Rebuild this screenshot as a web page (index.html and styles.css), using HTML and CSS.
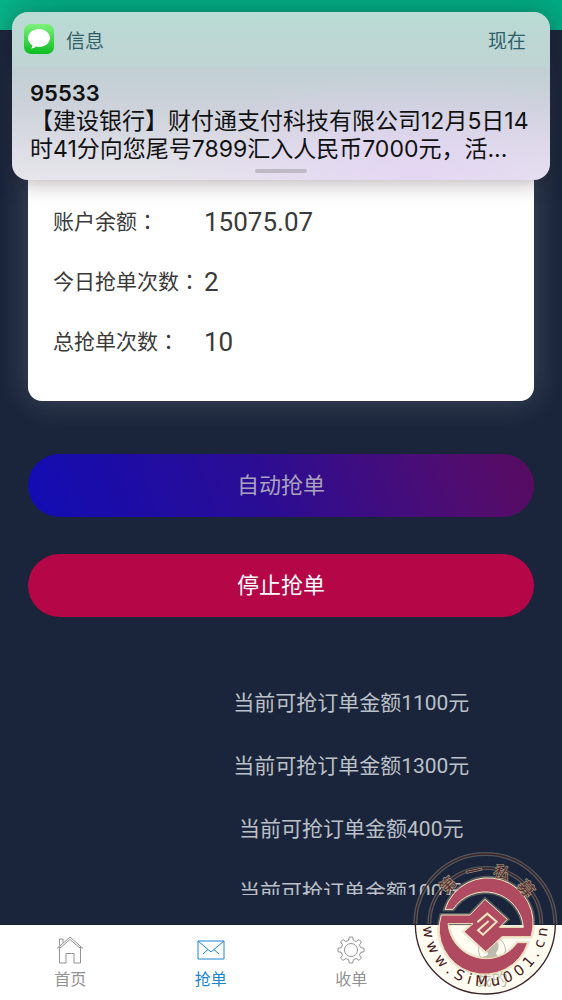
FILE: index.html
```html
<!DOCTYPE html>
<html lang="zh-CN">
<head>
<meta charset="utf-8">
<meta name="viewport" content="width=device-width, initial-scale=1">
<title>抢单</title>
<link rel="stylesheet" href="styles.css">
</head>
<body>
<div class="app">
  <header class="topbar"></header>

  <main class="main">
    <section class="card">
      <dl class="stats">
        <div class="stat"><dt>账户余额<span class="colon" lang="zh-TW">：</span></dt><dd>15075.07</dd></div>
        <div class="stat"><dt>今日抢单次数<span class="colon" lang="zh-TW">：</span></dt><dd>2</dd></div>
        <div class="stat"><dt>总抢单次数<span class="colon" lang="zh-TW">：</span></dt><dd>10</dd></div>
      </dl>
    </section>

    <div class="actions">
      <button type="button" class="btn btn-auto">自动抢单</button>
      <button type="button" class="btn btn-stop">停止抢单</button>
    </div>

    <ul class="orders">
      <li>当前可抢订单金额1100元</li>
      <li>当前可抢订单金额1300元</li>
      <li>当前可抢订单金额400元</li>
      <li>当前可抢订单金额100元</li>
    </ul>
  </main>

  <nav class="tabs">
    <a href="#home" class="tab">
      <svg class="tab-icon" viewBox="0 0 28 28" aria-hidden="true"><path d="M1 12.500 14 1l13 11.500M3.500 10.500V27H10V17.500h8V27h6.500V10.500M3.500 12.500 14 3.500l10.500 9M3.500 9.500V3H7v3.500"/></svg>
      <span>首页</span>
    </a>
    <a href="#grab" class="tab tab-active" aria-current="page">
      <svg class="tab-icon" viewBox="0 0 28 28" aria-hidden="true"><path d="M1 5h26v18H1zM1 5l13 11L27 5M6 18l5-4.500M22 18l-5-4.500"/></svg>
      <span>抢单</span>
    </a>
    <a href="#collect" class="tab">
      <svg class="tab-icon" viewBox="0 0 28 28" aria-hidden="true"><circle cx="14" cy="14" r="6.500"/><path d="M11.600 4.300 12.300 1h3.400l.7 3.300 2.800 1.200L22 3.600 24.400 6l-1.900 2.800 1.200 2.800 3.300.7v3.400l-3.300.7-1.200 2.800 1.900 2.800L22 24.400l-2.800-1.900-2.800 1.200-.7 3.300h-3.400l-.7-3.300-2.800-1.200L6 24.400 3.600 22l1.900-2.800-1.200-2.800L1 15.700v-3.400l3.300-.7 1.200-2.800L3.600 6 6 3.600l2.800 1.900z"/></svg>
      <span>收单</span>
    </a>
    <a href="#mine" class="tab">
      <svg class="tab-icon" viewBox="0 0 28 28" aria-hidden="true"><circle cx="14" cy="14" r="13.500"/><path class="solid" d="M3 22c4-2 7-2 7-5-4-5-4-13 4-13s8 8 4 13c0 3 3 3 7 5-5 7-17 7-22 0z"/></svg>
      <span>我的</span>
    </a>
  </nav>

  <aside class="notice">
    <div class="notice-head">
      <svg class="notice-icon" viewBox="0 0 30 30" aria-hidden="true">
        <defs><linearGradient id="msg" x1="0" y1="0" x2="0" y2="1"><stop offset="0" stop-color="#7df27c"/><stop offset="1" stop-color="#0cbd22"/></linearGradient></defs>
        <rect width="30" height="30" rx="7" fill="url(#msg)"/>
        <path fill="#fff" d="M15 5c6 0 11 4 11 9s-5 9-11 9c-1 0-2 0-3-.4-1 1.300-3 1.900-5 1.800 1-1 1.500-2 1.400-3C5.700 19.700 4 17 4 14c0-5 5-9 11-9z"/>
      </svg>
      <span class="notice-app">信息</span>
      <span class="notice-time">现在</span>
    </div>
    <div class="notice-body">
      <strong>95533</strong>
      <p>【建设银行】财付通支付科技有限公司12月5日14<br>时41分向您尾号7899汇入人民币7000元，活...</p>
      <span class="grip"></span>
    </div>
  </aside>

  <svg class="seal" viewBox="0 0 486 480" role="img" aria-label="第一私募 www.SiMu001.cn">
    <defs>
      <path id="emblem" d="M135 208A135 135 0 0 1 393 290H306L257 335 192 275 219 251H144A115 115 0 0 0 352 308H383A135 135 0 0 1 124 225H210L255 178 322 238 298 262H370A115 115 0 0 0 159 208Z"/>
      <clipPath id="below"><rect y="255" width="486" height="225"/></clipPath>
    </defs>
    <circle class="seal-paper" cx="256" cy="252" r="210" clip-path="url(#below)"/>
    <path class="halo" d="M46 252a210 210 0 0 1 420 0M88 252a168 168 0 0 1 336 0"/>
    <circle class="line" cx="256" cy="252" r="210"/>
    <path class="line" d="M88 252a168 168 0 0 1 336 0"/>
    <use href="#emblem" class="emblem-glow"/>
    <use href="#emblem" class="emblem"/>
    <path class="emblem-cut" d="M232 247 262 221 290 245 249 284 234 271 266 243"/>
    <g class="seal-cn">
      <text x="256" y="107" transform="rotate(-44 256 252)">第</text>
      <text x="256" y="107" transform="rotate(-12 256 252)">一</text>
      <text x="256" y="107" transform="rotate(18 256 252)">私</text>
      <text x="256" y="107" transform="rotate(49 256 252)">募</text>
    </g>
    <g class="seal-url">
      <text x="256" y="439" transform="rotate(82 256 252)">w</text>
      <text x="256" y="439" transform="rotate(66 256 252)">w</text>
      <text x="256" y="439" transform="rotate(50 256 252)">w</text>
      <text x="256" y="439" transform="rotate(38 256 252)">.</text>
      <text x="256" y="439" transform="rotate(27 256 252)">S</text>
      <text x="256" y="439" transform="rotate(16 256 252)">i</text>
      <text x="256" y="439" transform="rotate(4 256 252)">M</text>
      <text x="256" y="439" transform="rotate(-10 256 252)">u</text>
      <text x="256" y="439" transform="rotate(-23 256 252)">0</text>
      <text x="256" y="439" transform="rotate(-36 256 252)">0</text>
      <text x="256" y="439" transform="rotate(-49 256 252)">1</text>
      <text x="256" y="439" transform="rotate(-59 256 252)">.</text>
      <text x="256" y="439" transform="rotate(-70 256 252)">c</text>
      <text x="256" y="439" transform="rotate(-82 256 252)">n</text>
    </g>
  </svg>
</div>
</body>
</html>
```
FILE: styles.css
```css
* {
  box-sizing: border-box;
}

body {
  margin: 0;
  font-family: Roboto, "Noto Sans CJK SC", sans-serif;
  font-weight: 400;
  background: #1a253b;
}

.app {
  position: relative;
  display: flex;
  flex-direction: column;
  height: 100vh;
  overflow: hidden;
}

.topbar {
  flex: none;
  height: 30px;
  background: linear-gradient(90deg, #08b287, #00a982 12%, #00a982);
}

.main {
  flex: 1;
  min-height: 0;
  display: flex;
  flex-direction: column;
  padding: 30px 28px;
}

.card {
  flex: none;
  padding: 132px 25px 29px;
  border-radius: 14px;
  background: #fff;
  box-shadow: 0 0 32px rgba(255, 255, 255, 0.18);
}

.stats {
  margin: 0;
}

.stat {
  display: flex;
  align-items: center;
  height: 60px;
  color: #3a3a3a;
}

.stat dt {
  width: 151px;
  padding-bottom: 4px;
  font-size: 21px;
  white-space: nowrap;
}

.stat dd {
  margin: 0;
  font-size: 26px;
}

.colon {
  font-family: "Noto Sans CJK TC", sans-serif;
}

.actions {
  flex: none;
  display: grid;
  gap: 37px;
  margin-top: 53px;
}

.btn {
  height: 63px;
  padding: 0 0 6px;
  border: 0;
  border-radius: 32px;
  font: inherit;
  font-size: 22px;
}

.btn-auto {
  color: #a9a2bd;
  background: linear-gradient(70deg, #120cb4, #2a0d94 45%, #500d70 85%, #580b60);
}

.btn-stop {
  color: #fff;
  background: #b50648;
}

.orders {
  flex: 1;
  min-height: 0;
  overflow: hidden;
  margin: 55px -28px 0 calc(25% - 14px);
  padding: 0;
  list-style: none;
  text-align: center;
  font-size: 21px;
  line-height: 63px;
  color: #bcc0c8;
}

.tabs {
  flex: none;
  display: grid;
  grid-template-columns: repeat(4, 1fr);
  height: 75px;
  background: #fff;
}

.tab {
  display: flex;
  flex-direction: column;
  align-items: center;
  gap: 4px;
  padding-top: 11px;
  font-size: 16px;
  line-height: 24px;
  color: #929292;
  text-decoration: none;
}

.tab-active {
  color: #1c86d1;
}

.tab-icon {
  width: 28px;
  height: 28px;
  fill: none;
  stroke: currentColor;
  stroke-width: 1;
}

.tab-icon .solid {
  fill: currentColor;
  stroke: none;
}

.notice {
  position: absolute;
  top: 12px;
  left: 12px;
  right: 12px;
  border-radius: 16px;
  overflow: hidden;
  background:
    radial-gradient(ellipse at 75% 100%, rgba(228, 208, 248, 0.7), rgba(228, 208, 248, 0) 45%),
    linear-gradient(#b9d8d3, #c0d0d3 32%, #ccd1da 55%, #dfdfe7 85%, #e6e5eb);
  box-shadow: 0 2px 22px rgba(40, 20, 30, 0.35);
}

.notice-head {
  display: flex;
  align-items: center;
  gap: 12px;
  height: 54px;
  padding: 0 24px 0 12px;
  font-size: 19px;
  color: #2f6069;
  background: rgba(190, 230, 218, 0.2);
}

.notice-icon {
  width: 30px;
  height: 30px;
}

.notice-time {
  margin-left: auto;
}

.notice-body {
  height: 114px;
  padding: 13px 18px 0;
  font-family: Inter, "Noto Sans CJK SC", sans-serif;
  color: #111;
}

.notice-body strong {
  display: block;
  font-size: 22px;
  line-height: 28px;
  font-weight: 600;
}

.notice-body p {
  margin: 0;
  font-size: 23px;
  line-height: 28px;
  white-space: nowrap;
}

.grip {
  display: block;
  width: 52px;
  height: 4px;
  margin: 6px auto 0;
  border-radius: 2px;
  background: #bdbac6;
}

.seal {
  position: absolute;
  right: 0;
  bottom: 0;
  width: 162px;
  height: 160px;
  pointer-events: none;
}

.seal-paper {
  fill: #fff9dc;
  fill-opacity: 0.4;
}

.halo {
  fill: none;
  stroke: #b7b59a;
  stroke-opacity: 0.35;
  stroke-width: 12px;
}

.line {
  fill: none;
  stroke: #3c2328;
  stroke-width: 4px;
}

.emblem-glow {
  fill: none;
  stroke: #c9c4a2;
  stroke-opacity: 0.35;
  stroke-width: 12px;
}

.emblem {
  fill: #b04a60;
  stroke: #f3e6c0;
  stroke-width: 3px;
}

.emblem-cut {
  fill: none;
  stroke: #f5e8c0;
  stroke-width: 6px;
}

.seal-cn text {
  font-size: 48px;
  text-anchor: middle;
  fill: #55292b;
  stroke: #a89c84;
  stroke-width: 4px;
  paint-order: stroke;
}

.seal-url text {
  font-family: "DejaVu Sans", sans-serif;
  font-size: 44px;
  text-anchor: middle;
  fill: #4a2022;
}
```
